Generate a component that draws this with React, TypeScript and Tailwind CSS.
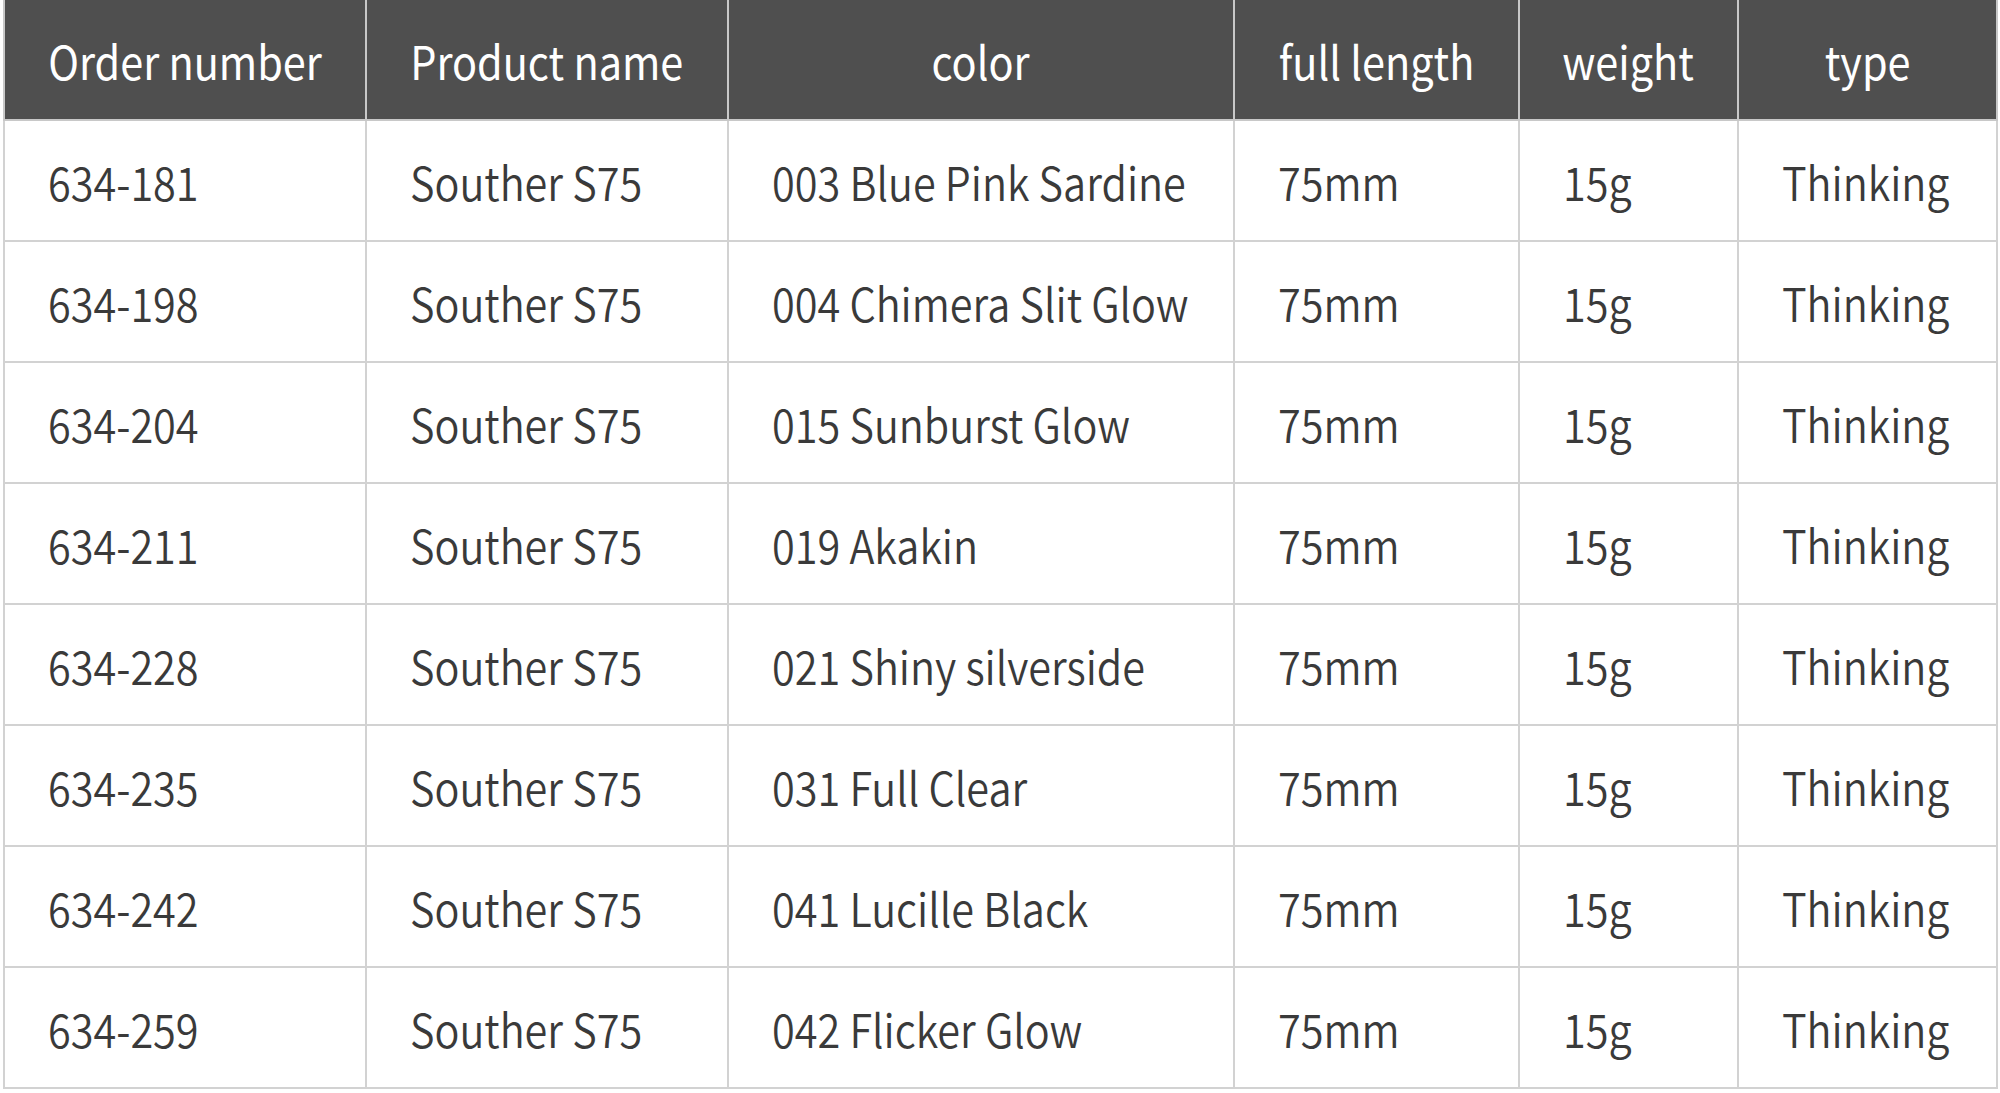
const ROWS = [
  ['634-181', '003 Blue Pink Sardine'],
  ['634-198', '004 Chimera Slit Glow'],
  ['634-204', '015 Sunburst Glow'],
  ['634-211', '019 Akakin'],
  ['634-228', '021 Shiny silverside'],
  ['634-235', '031 Full Clear'],
  ['634-242', '041 Lucille Black'],
  ['634-259', '042 Flicker Glow'],
];

const HEADERS = ['Order number', 'Product name', 'color', 'full length', 'weight', 'type'];

export default function App() {
  return (
    <div className="w-[2000px] h-[1093px] bg-white overflow-hidden pl-[3px]">
      <table
        className="table-fixed border-collapse w-[1993px] text-[46px] leading-none"
        style={{ fontFamily: '"Noto Sans CJK JP", "Noto Sans", sans-serif' }}
      >
        <colgroup>
          <col className="w-[362px]" />
          <col className="w-[362px]" />
          <col className="w-[506px]" />
          <col className="w-[285px]" />
          <col className="w-[219px]" />
          <col className="w-[259px]" />
        </colgroup>
        <thead>
          <tr className="h-[120px] bg-[#4f4f4f]">
            {HEADERS.map((h) => (
              <th
                key={h}
                className="text-center font-normal text-white border-x-2 border-b-2 border-[#c8c8c8] px-2 align-middle whitespace-nowrap"
              >
                <span className="inline-block scale-x-[0.9]">{h}</span>
              </th>
            ))}
          </tr>
        </thead>
        <tbody>
          {ROWS.map(([order, color]) => (
            <tr key={order} className="h-[121px]">
              {[order, 'Souther S75', color, '75mm', '15g', 'Thinking'].map((v, i) => (
                <td
                  key={i}
                  className="border-x-2 border-y-2 border-[#d2d2d2] pl-[43px] text-left text-[#3a3a3a] font-[350] align-middle whitespace-nowrap"
                >
                  <span className="inline-block origin-left scale-x-[0.9]">{v}</span>
                </td>
              ))}
            </tr>
          ))}
        </tbody>
      </table>
    </div>
  );
}
